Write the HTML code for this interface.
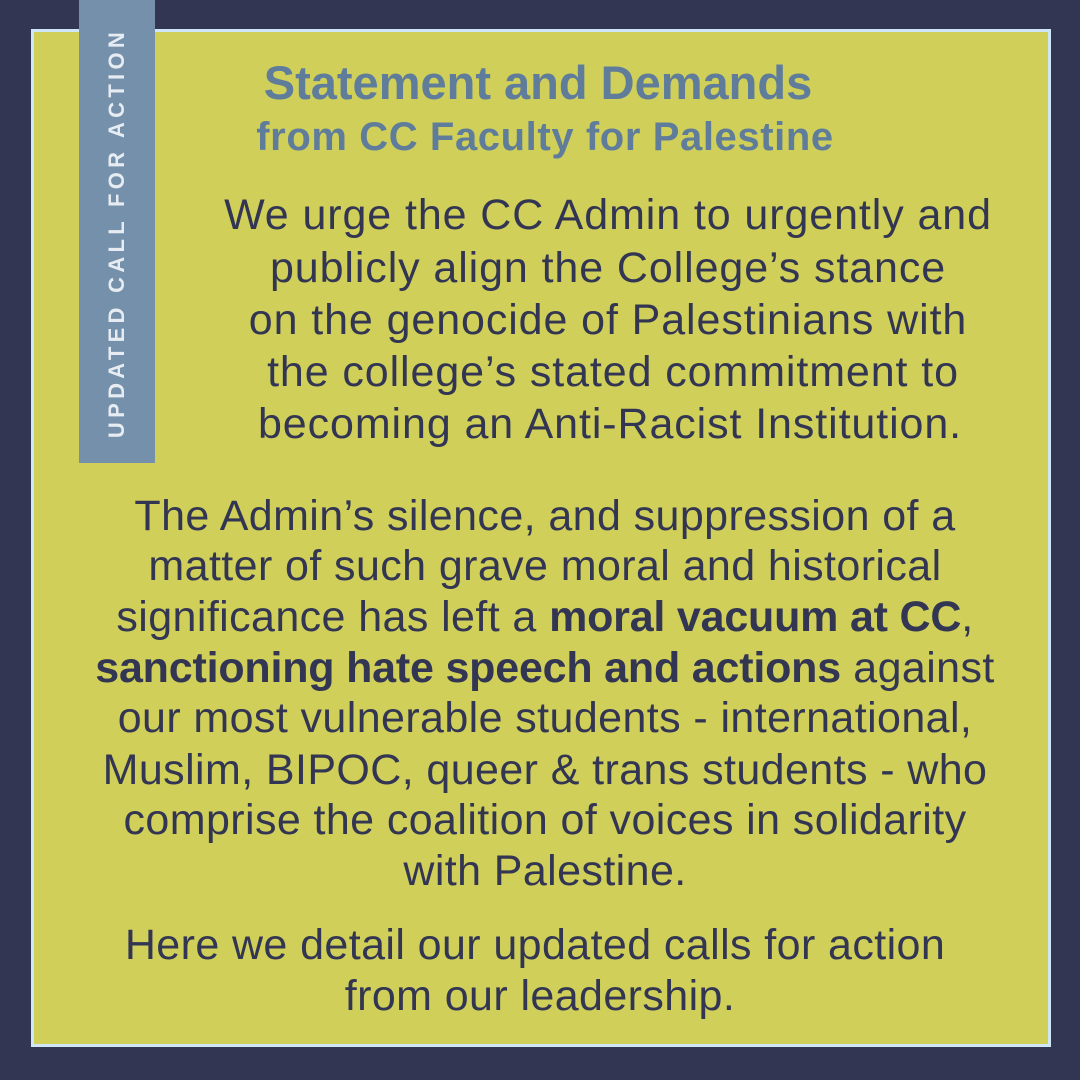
<!DOCTYPE html>
<html><head><meta charset="utf-8"><style>
html,body{margin:0;padding:0}
body{width:1080px;height:1080px;background:#333652;position:relative;overflow:hidden;font-family:"Liberation Sans",sans-serif}
.frame{position:absolute;left:31px;top:29px;width:1014px;height:1012px;border:3px solid #cfe6f7;background:#d0cf5a}
.side{position:absolute;left:79px;top:0;width:76px;height:463px;background:#7490aa}
.vt{position:absolute;left:117px;top:233px;transform:translate(-50%,-50%) rotate(-90deg);white-space:nowrap;color:#e6ecf2;font-weight:bold;font-size:22px;letter-spacing:4.3px}
.l{position:absolute;white-space:nowrap;text-align:center;line-height:52px;color:#333652;font-size:43px;letter-spacing:0.4px}
.w{letter-spacing:0.9px}
.t{color:#5f7d9a;font-weight:bold;letter-spacing:0}
b{font-weight:bold;letter-spacing:-0.2px}
</style></head><body>
<div class="frame"></div>
<div class="side"></div>
<div class="vt">UPDATED CALL FOR ACTION</div>
<div class="l t" style="left:138px;width:800px;top:57px;font-size:47px">Statement and Demands</div>
<div class="l t" style="left:145px;width:800px;top:111px;font-size:40px;letter-spacing:0.6px">from CC Faculty for Palestine</div>

<div class="l w" style="left:208px;width:800px;top:189px">We urge the CC Admin to urgently and</div>
<div class="l w" style="left:208px;width:800px;top:242px">publicly align the College’s stance</div>
<div class="l w" style="left:208px;width:800px;top:294px">on the genocide of Palestinians with</div>
<div class="l w" style="left:213px;width:800px;top:346px">the college’s stated commitment to</div>
<div class="l w" style="left:210px;width:800px;top:398px">becoming an Anti-Racist Institution.</div>

<div class="l" style="left:45px;width:1000px;top:490px">The Admin’s silence, and suppression of a</div>
<div class="l" style="left:45px;width:1000px;top:540px">matter of such grave moral and historical</div>
<div class="l" style="left:45px;width:1000px;top:591px">significance has left a <b>moral vacuum at CC</b>,</div>
<div class="l" style="left:45px;width:1000px;top:642px"><b>sanctioning hate speech and actions</b> against</div>
<div class="l" style="left:45px;width:1000px;top:692px">our most vulnerable students - international,</div>
<div class="l" style="left:45px;width:1000px;top:744px">Muslim, BIPOC, queer &amp; trans students - who</div>
<div class="l" style="left:45px;width:1000px;top:794px">comprise the coalition of voices in solidarity</div>
<div class="l" style="left:45px;width:1000px;top:845px">with Palestine.</div>

<div class="l" style="left:35px;width:1000px;top:919px">Here we detail our updated calls for action</div>
<div class="l" style="left:40px;width:1000px;top:970px">from our leadership.</div>
</body></html>
